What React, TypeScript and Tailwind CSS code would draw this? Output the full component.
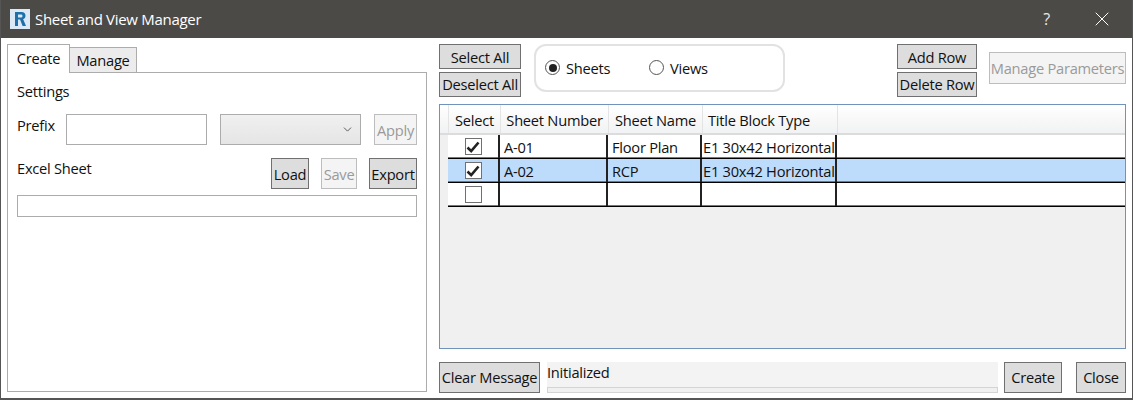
import { ChevronDown, X } from "lucide-react";

const rows = [
  { checked: true, number: "A-01", name: "Floor Plan", type: "E1 30x42 Horizontal", selected: false },
  { checked: true, number: "A-02", name: "RCP", type: "E1 30x42 Horizontal", selected: true },
  { checked: false, number: "", name: "", type: "", selected: false },
];

function Btn({ label, className = "", disabled = false }: { label: string; className?: string; disabled?: boolean }) {
  return (
    <button
      type="button"
      className={`flex shrink-0 items-center justify-center whitespace-nowrap border ${
        disabled ? "border-[#bdbdbd] bg-[#f4f4f4] text-[#9a9a9a]" : "border-[#707070] bg-[#dddddd] text-[#111]"
      } ${className}`}
    >
      {label}
    </button>
  );
}

function Radio({ label, on, className }: { label: string; on: boolean; className: string }) {
  return (
    <div className={`flex items-center ${className}`}>
      <span className="flex h-[15px] w-[15px] items-center justify-center rounded-full border border-[#555] bg-white">
        {on && <span className="h-2 w-2 rounded-full bg-[#222]" />}
      </span>
      <span className="ml-[6px] pt-px">{label}</span>
    </div>
  );
}

export default function App() {
  return (
    <div className="flex h-[400px] w-[1133px] flex-col overflow-hidden border-x border-b-2 border-[#555] bg-white font-['Open_Sans',sans-serif] text-[14.67px] leading-none tracking-[-0.25px] text-[#111]">
      <div className="flex h-[38px] shrink-0 items-center bg-[#4c4a47] text-white">
        <svg width="20" height="20" viewBox="0 0 20 20" className="ml-[9px]">
          <rect width="20" height="20" fill="#dbe8f5" />
          <path d="M5 3h6.5c2.6 0 4 1.5 4 3.7 0 1.8-1 3-2.4 3.4L16 17h-3.4l-2.6-6.4H8V17H5z M8 5.4v3h3c1 0 1.5-.6 1.5-1.5S12 5.4 11 5.4z" fill="#1f6fa8" fillRule="evenodd" />
        </svg>
        <span className="ml-[5px] text-[15px] tracking-[-0.3px]">Sheet and View Manager</span>
        <span className="ml-auto text-[16px] text-[#e8e8e8]">?</span>
        <X className="ml-[40px] mr-[18px] h-[24px] w-[24px] text-white" strokeWidth={1} />
      </div>

      <div className="flex min-h-0 flex-1 pl-[6px] pr-[6px]">
        <div className="flex w-[420px] shrink-0 flex-col pt-[6px]">
          <div className="flex h-[28px] shrink-0 items-end">
            <div className="relative z-10 -mb-px flex h-[29px] w-[63px] items-center justify-center border border-b-0 border-[#acacac] bg-white pb-[2px]">
              Create
            </div>
            <div className="flex h-[25px] w-[67px] items-center justify-center border border-b-0 border-l-0 border-[#acacac] bg-[#ececec]">
              Manage
            </div>
          </div>
          <div className="h-[320px] border border-[#acacac] px-[9px]">
            <div className="mt-[11px] h-[16px]">Settings</div>
            <div className="mt-[14px] flex h-[31px] items-start">
              <span className="mt-[4px] w-[49px]">Prefix</span>
              <div className="h-[31px] w-[141px] border border-[#acacac] bg-white" />
              <div className="ml-[13px] flex h-[31px] w-[141px] items-center justify-end border border-[#acacac] bg-gradient-to-b from-[#f0f0f0] to-[#e5e5e5] pr-[6px]">
                <ChevronDown className="h-[13px] w-[13px] text-[#555]" strokeWidth={1.75} />
              </div>
              <Btn label="Apply" disabled className="ml-[13px] h-[31px] w-[43px] pt-[2px]" />
            </div>
            <div className="mt-[13px] flex h-[31px] items-start">
              <span className="mt-[3px]">Excel Sheet</span>
              <Btn label="Load" className="ml-auto h-[31px] w-[38px] pt-[2px]" />
              <Btn label="Save" disabled className="ml-[12px] h-[31px] w-[36px] pt-[2px]" />
              <Btn label="Export" className="ml-[12px] h-[31px] w-[48px] pt-[2px]" />
            </div>
            <div className="mt-[6px] h-[22px] border border-[#acacac] bg-white" />
          </div>
        </div>

        <div className="ml-[12px] flex min-w-0 flex-1 flex-col pt-[6px]">
          <div className="flex h-[60px] shrink-0 items-start">
            <div className="flex w-[82px] flex-col gap-[3px]">
              <Btn label="Select All" className="h-[25px] pt-[2px]" />
              <Btn label="Deselect All" className="h-[25px]" />
            </div>
            <div className="ml-[13px] flex h-[48px] w-[251px] items-center rounded-[12px] border-2 border-[#e2e2e2] pl-[9px]">
              <Radio label="Sheets" on className="w-[104px]" />
              <Radio label="Views" on={false} className="" />
            </div>
            <div className="ml-[112px] flex w-[80px] flex-col gap-[3px]">
              <Btn label="Add Row" className="h-[25px] pt-[2px]" />
              <Btn label="Delete Row" className="h-[25px]" />
            </div>
            <Btn label="Manage Parameters" disabled className="ml-[12px] mt-[8px] h-[32px] w-[137px] pt-px" />
          </div>

          <div className="h-[245px] shrink-0 border border-[#6f93bb] bg-[#f0f0f0]">
            <div className="flex h-[30px] border-b-2 border-[#dcdcdc] bg-gradient-to-b from-white to-[#f1f2f3]">
              <div className="w-[9px] border-r border-[#e4e4e4]" />
              <div className="flex w-[52px] items-center justify-center border-r border-[#e4e4e4] pt-[3px]">Select</div>
              <div className="flex w-[108px] items-center justify-center border-r border-[#e4e4e4] pt-[3px]">Sheet Number</div>
              <div className="flex w-[94px] items-center justify-center border-r border-[#e4e4e4] pt-[3px]">Sheet Name</div>
              <div className="flex w-[135px] items-center border-r border-[#e4e4e4] pl-[5px] pt-[3px]">Title Block Type</div>
            </div>
            {rows.map((row, i) => (
              <div key={i} className="flex h-[24px] pl-[8px]">
                <div className={`flex flex-1 border-b border-black shadow-[inset_0_-1px_0_#777] ${row.selected ? "bg-[#bddcfb]" : "bg-white"}`}>
                  <div className="flex w-[52px] items-center justify-center border-r-2 border-[#222]">
                    <span className="flex h-[17px] w-[17px] items-center justify-center border border-[#707070] bg-white">
                      {row.checked && (
                        <svg width="14" height="14" viewBox="0 0 14 14">
                          <path d="M1.5 7.5 L5.2 11.2 L12.5 2.5" fill="none" stroke="#222" strokeWidth="2.6" />
                        </svg>
                      )}
                    </span>
                  </div>
                  <div className="flex w-[108px] items-center border-r-2 border-[#222] pl-[4px] pt-[2px]">{row.number}</div>
                  <div className="flex w-[94px] items-center border-r-2 border-[#222] pl-[4px] pt-[2px]">{row.name}</div>
                  <div className="flex w-[135px] items-center overflow-hidden whitespace-nowrap border-r-2 border-[#222] pl-[1px] pt-[2px]">{row.type}</div>
                </div>
              </div>
            ))}
          </div>

          <div className="mt-[13px] flex h-[31px] shrink-0">
            <Btn label="Clear Message" className="h-[31px] w-[101px]" />
            <div className="ml-[7px] flex w-[451px] flex-col justify-between bg-[#f3f3f3]">
              <span className="mt-[3px]">Initialized</span>
              <div className="h-[6px] border border-[#d4d4d4] bg-[#f0f0f0]" />
            </div>
            <Btn label="Create" className="ml-[6px] h-[31px] w-[58px]" />
            <Btn label="Close" className="ml-[14px] h-[31px] w-[50px]" />
          </div>
        </div>
      </div>
    </div>
  );
}
